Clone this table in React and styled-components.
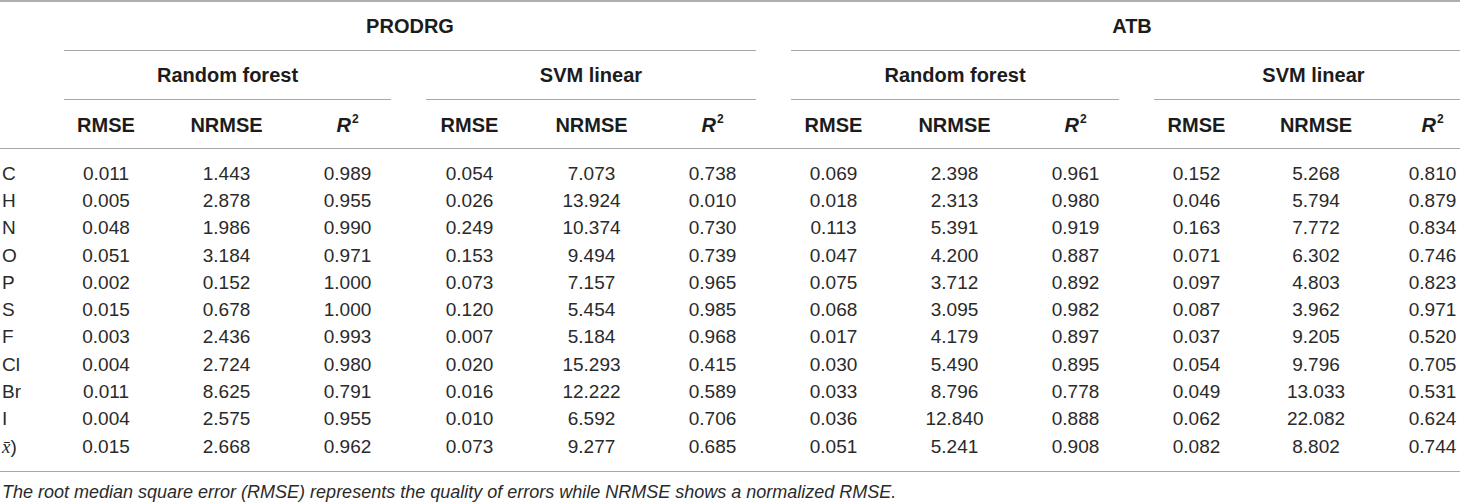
import React from "react";
import styled, { createGlobalStyle } from "styled-components";

const Global = createGlobalStyle`
  html, body { margin: 0; padding: 0; background: #fff; }
  body { font-family: "Liberation Sans", Arial, sans-serif; color: #222; overflow: hidden; }
`;

const Page = styled.div`
  width: 1460px;
  overflow: hidden;
`;

const COLS = "46px 120px 121px 121px 123px 121px 121px 121px 121px 121px 121px 118px 115px";

const Table = styled.div`
  width: 1490px;
  border-top: 2px solid #aeaeae;
`;

const Head = styled.div`
  display: grid;
  grid-template-columns: ${COLS};
  grid-template-rows: 49px 49px 48px;
  border-bottom: 1px solid #a8a8a8;
`;

const GroupCell = styled.div`
  grid-column: ${(p) => p.$col} / span ${(p) => p.$span};
  grid-row: ${(p) => p.$row};
  display: flex;
`;

const GroupLabel = styled.div`
  flex: 1;
  margin: 0 17px 0 18px;
  border-bottom: 1px solid #a8a8a8;
  display: flex;
  align-items: center;
  justify-content: center;
  font-weight: 700;
  font-size: 20px;
  color: #1c1c1c;
  padding-top: 1px;
`;

const ColHead = styled.div`
  grid-row: 3;
  display: flex;
  align-items: center;
  justify-content: center;
  font-weight: 700;
  font-size: 20px;
  color: #1c1c1c;
  padding-top: 2px;
  i { font-style: italic; }
  sup { font-size: 12px; position: relative; top: -1px; margin-left: 1px; }
`;

const Body = styled.div`
  display: grid;
  grid-template-columns: ${COLS};
  grid-auto-rows: 27.3px;
  padding: 11px 0 11px;
  border-bottom: 1px solid #a8a8a8;
`;

const Cell = styled.div`
  display: flex;
  align-items: center;
  justify-content: ${(p) => (p.$label ? "flex-start" : "center")};
  padding-left: ${(p) => (p.$label ? "2px" : "0")};
  font-size: 19px;
  color: #2a2a2a;
  white-space: nowrap;
`;

const Bar = styled.span`
  font-family: "Liberation Serif", "Times New Roman", serif;
  font-style: italic;
`;

const Note = styled.p`
  margin: 9px 0 0 2px;
  font-style: italic;
  font-size: 18px;
  line-height: 22px;
  color: #2a2a2a;
  white-space: nowrap;
`;

const rows = [
  ["C", "0.011", "1.443", "0.989", "0.054", "7.073", "0.738", "0.069", "2.398", "0.961", "0.152", "5.268", "0.810"],
  ["H", "0.005", "2.878", "0.955", "0.026", "13.924", "0.010", "0.018", "2.313", "0.980", "0.046", "5.794", "0.879"],
  ["N", "0.048", "1.986", "0.990", "0.249", "10.374", "0.730", "0.113", "5.391", "0.919", "0.163", "7.772", "0.834"],
  ["O", "0.051", "3.184", "0.971", "0.153", "9.494", "0.739", "0.047", "4.200", "0.887", "0.071", "6.302", "0.746"],
  ["P", "0.002", "0.152", "1.000", "0.073", "7.157", "0.965", "0.075", "3.712", "0.892", "0.097", "4.803", "0.823"],
  ["S", "0.015", "0.678", "1.000", "0.120", "5.454", "0.985", "0.068", "3.095", "0.982", "0.087", "3.962", "0.971"],
  ["F", "0.003", "2.436", "0.993", "0.007", "5.184", "0.968", "0.017", "4.179", "0.897", "0.037", "9.205", "0.520"],
  ["Cl", "0.004", "2.724", "0.980", "0.020", "15.293", "0.415", "0.030", "5.490", "0.895", "0.054", "9.796", "0.705"],
  ["Br", "0.011", "8.625", "0.791", "0.016", "12.222", "0.589", "0.033", "8.796", "0.778", "0.049", "13.033", "0.531"],
  ["I", "0.004", "2.575", "0.955", "0.010", "6.592", "0.706", "0.036", "12.840", "0.888", "0.062", "22.082", "0.624"],
  ["MEAN", "0.015", "2.668", "0.962", "0.073", "9.277", "0.685", "0.051", "5.241", "0.908", "0.082", "8.802", "0.744"],
];

const metrics = ["RMSE", "NRMSE", "R2"];

export default function App() {
  const heads = [];
  for (let g = 0; g < 4; g++) {
    metrics.forEach((m, i) => {
      heads.push(
        <ColHead key={`${g}-${m}`} style={{ gridColumn: 2 + g * 3 + i }}>
          {m === "R2" ? (
            <span>
              <i>R</i>
              <sup>2</sup>
            </span>
          ) : (
            m
          )}
        </ColHead>
      );
    });
  }
  return (
    <Page>
      <Global />
      <Table>
        <Head>
          <GroupCell $col={2} $span={6} $row={1}>
            <GroupLabel>PRODRG</GroupLabel>
          </GroupCell>
          <GroupCell $col={8} $span={6} $row={1}>
            <GroupLabel>ATB</GroupLabel>
          </GroupCell>
          <GroupCell $col={2} $span={3} $row={2}>
            <GroupLabel>Random forest</GroupLabel>
          </GroupCell>
          <GroupCell $col={5} $span={3} $row={2}>
            <GroupLabel>SVM linear</GroupLabel>
          </GroupCell>
          <GroupCell $col={8} $span={3} $row={2}>
            <GroupLabel>Random forest</GroupLabel>
          </GroupCell>
          <GroupCell $col={11} $span={3} $row={2}>
            <GroupLabel>SVM linear</GroupLabel>
          </GroupCell>
          {heads}
        </Head>
        <Body>
          {rows.map((r) =>
            r.map((v, i) =>
              i === 0 ? (
                <Cell key={`${r[0]}-${i}`} $label>
                  {v === "MEAN" ? (
                    <>
                      <Bar>x̄</Bar>)
                    </>
                  ) : (
                    v
                  )}
                </Cell>
              ) : (
                <Cell key={`${r[0]}-${i}`}>{v}</Cell>
              )
            )
          )}
        </Body>
      </Table>
      <Note>
        The root median square error (RMSE) represents the quality of errors while NRMSE shows a normalized RMSE.
      </Note>
    </Page>
  );
}
